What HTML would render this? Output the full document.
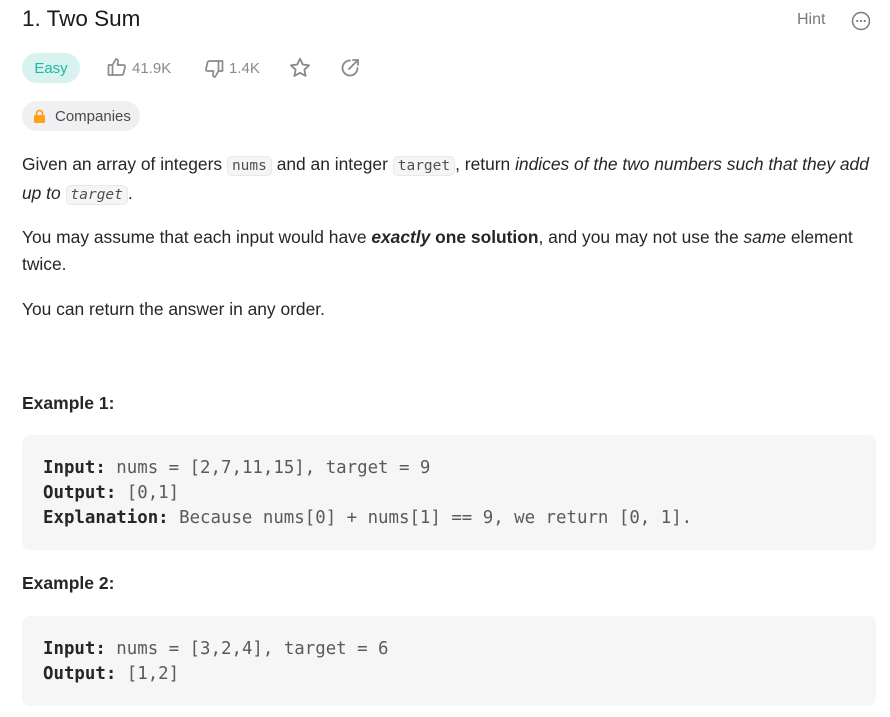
<!DOCTYPE html>
<html><head><meta charset="utf-8"><style>
body{margin:0;background:#fff;font-family:"Liberation Sans",sans-serif;color:#262626;width:890px;height:717px;overflow:hidden;position:relative}
.a{position:absolute}
.t{left:22px;top:6px;font-size:22.5px;color:#1a1a1a}
.hint{left:797px;top:11px;font-size:16px;color:#7a7a7a}
.pill{border-radius:16px;height:30px;line-height:31px;font-size:15px}
.easy{left:22px;top:53px;width:58px;background:#d8f3ef;color:#1cb8a0;text-align:center}
.stat{font-size:15px;color:#8a8a8a;top:60px}
.comp{left:22px;top:101px;width:118px;background:#f0f0f2;color:#4a4a4a;font-size:15px}
p{position:absolute;left:22px;margin:0;font-size:17.4px;line-height:27px;width:860px}
code{font-family:"DejaVu Sans Mono",monospace;font-size:14.5px;background:#f5f5f5;border:1px solid #e8e8e8;border-radius:5px;padding:1px 4px;color:#505050}
.pre{position:absolute;left:22px;width:854px;background:#f6f6f6;border-radius:8px;font-family:"DejaVu Sans Mono",monospace;font-size:17.4px;line-height:25px;color:#5a5a5a;box-sizing:border-box;padding:21px 21px}
.pre b{color:#262626}
h4{position:absolute;left:22px;margin:0;font-size:17.5px;font-weight:bold}
</style></head><body>
<div class="a t">1. Two Sum</div>
<div class="a hint">Hint</div>
<svg class="a" style="left:851px;top:11px" width="20" height="20" viewBox="0 0 20 20"><circle cx="10" cy="10" r="8.5" fill="none" stroke="#7a7a7a" stroke-width="1.5"/><circle cx="6.3" cy="10" r="1.1" fill="#7a7a7a"/><circle cx="10" cy="10" r="1.1" fill="#7a7a7a"/><circle cx="13.7" cy="10" r="1.1" fill="#7a7a7a"/></svg>
<div class="a pill easy">Easy</div>
<svg class="a" style="left:107px;top:57px" width="20" height="20" viewBox="0 0 20 20" fill="none" stroke="#8a8a8a" stroke-width="1.7" stroke-linejoin="round"><rect x="1.5" y="8" width="4" height="10"/><path d="M5.5 8 L9 2 Q11.5 2 11 5 L10.5 8 H16.5 Q18.5 8 18 10 L16.5 16.5 Q16 18 14.5 18 H5.5"/></svg>
<div class="a stat" style="left:132px">41.9K</div>
<svg class="a" style="left:204px;top:59px" width="20" height="20" viewBox="0 0 20 20" fill="none" stroke="#8a8a8a" stroke-width="1.7" stroke-linejoin="round"><rect x="14.5" y="2" width="4" height="10"/><path d="M14.5 12 L11 18 Q8.5 18 9 15 L9.5 12 H3.5 Q1.5 12 2 10 L3.5 3.5 Q4 2 5.5 2 H14.5"/></svg>
<div class="a stat" style="left:229px">1.4K</div>
<svg class="a" style="left:289px;top:57px" width="22" height="22" viewBox="0 0 24 24" fill="none" stroke="#8a8a8a" stroke-width="2" stroke-linejoin="round"><path d="M12 2l3 6.2 6.8.9-5 4.7 1.3 6.8L12 17.3l-6.1 3.3 1.3-6.8-5-4.7 6.8-.9z"/></svg>
<svg class="a" style="left:340px;top:58px" width="20" height="20" viewBox="0 0 20 20" fill="none" stroke="#8a8a8a" stroke-width="1.8" stroke-linecap="round"><path d="M17.5 10 A7.5 7.5 0 1 1 10 2.5"/><path d="M9 11 L18 2 M13 2 H18 V7"/></svg>
<div class="a pill comp"><svg style="position:absolute;left:11px;top:8px" width="13" height="14" viewBox="0 0 13 14"><rect x="1" y="6" width="11" height="8" rx="1.5" fill="#ffa116"/><path d="M3.5 6V4.5a3 3 0 0 1 6 0V6" fill="none" stroke="#ffa116" stroke-width="1.8"/></svg><span style="position:absolute;left:33px">Companies</span></div>
<p style="top:151px">Given an array of integers <code>nums</code> and an integer <code>target</code>, return <i>indices of the two numbers such that they add up to <code>target</code></i>.</p>
<p style="top:224px">You may assume that each input would have <b><i>exactly</i> one solution</b>, and you may not use the <i>same</i> element twice.</p>
<p style="top:296px">You can return the answer in any order.</p>
<h4 style="top:393px">Example 1:</h4>
<div class="pre" style="top:435px;height:115px"><b>Input:</b> nums = [2,7,11,15], target = 9<br><b>Output:</b> [0,1]<br><b>Explanation:</b> Because nums[0] + nums[1] == 9, we return [0, 1].</div>
<h4 style="top:573px">Example 2:</h4>
<div class="pre" style="top:616px;height:90px"><b>Input:</b> nums = [3,2,4], target = 6<br><b>Output:</b> [1,2]</div>
</body></html>
